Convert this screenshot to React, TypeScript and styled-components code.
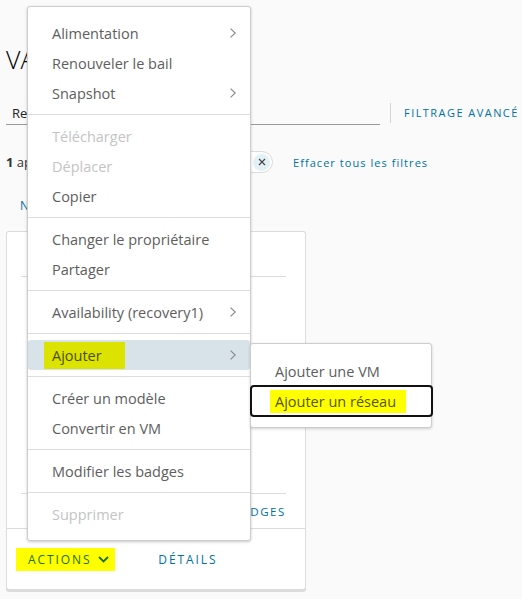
import React from "react";
import styled, { createGlobalStyle } from "styled-components";

const GlobalStyle = createGlobalStyle`
  html, body {
    margin: 0;
    padding: 0;
    background: #fafafa;
    font-family: "Open Sans", "Liberation Sans", sans-serif;
  }
  #root {
    height: 599px;
    overflow: hidden;
  }
`;

const Page = styled.div`
  position: relative;
  padding-left: 6px;
  height: 599px;
`;

const Title = styled.h1`
  margin: 0;
  padding-top: 43px;
  font-size: 25px;
  line-height: 32px;
  font-weight: 300;
  color: #000;
`;

const SearchRow = styled.div`
  display: flex;
  align-items: center;
  margin-top: 25px;
  height: 25px;
`;

const SearchField = styled.div`
  width: 374px;
  height: 24px;
  border-bottom: 1px solid #9a9a9a;
  font-size: 13px;
  line-height: 24px;
  color: #222;
  padding-left: 6px;
  box-sizing: border-box;
`;

const VSep = styled.div`
  width: 1px;
  height: 20px;
  background: #d4d4d4;
  margin-left: 10px;
`;

const Link = styled.span<{ $size?: number; $spacing?: number }>`
  color: #0072a3;
  font-size: ${(p) => p.$size ?? 11}px;
  letter-spacing: ${(p) => p.$spacing ?? 1}px;
  font-weight: 500;
  white-space: nowrap;
`;

const AdvancedLink = styled(Link)`
  margin-left: 13px;
`;

const FilterRow = styled.div`
  display: flex;
  align-items: center;
  margin-top: 25px;
  height: 24px;
`;

const Count = styled.div`
  width: 140px;
  font-size: 13px;
  color: #333;
  b {
    font-weight: 700;
  }
`;

const Chip = styled.div`
  width: 127px;
  height: 22px;
  box-sizing: border-box;
  border: 1px solid #dcdcdc;
  border-radius: 11px;
  background: #fff;
  display: flex;
  align-items: center;
  justify-content: flex-end;
  padding-right: 2px;
`;

const ChipClose = styled.span`
  width: 17px;
  height: 17px;
  border-radius: 50%;
  background: #e1f1f6;
  display: flex;
  align-items: center;
  justify-content: center;
`;

const ClearLink = styled(Link)`
  margin-left: 20px;
`;

const ButtonRow = styled.div`
  margin-top: 18px;
  height: 24px;
  line-height: 24px;
  padding-left: 14px;
`;

const Card = styled.div`
  margin-top: 15px;
  width: 300px;
  height: 358px;
  box-sizing: border-box;
  background: #fff;
  border: 1px solid #dcdcdc;
  border-bottom: none;
  border-radius: 3px;
  box-shadow: 0 3px 0 #dcdcdc;
  display: flex;
  flex-direction: column;
`;

const CardBlock = styled.div`
  padding: 0 19px 0 14px;
`;

const CardHeader = styled.div`
  height: 44px;
  border-bottom: 1px solid #dcdcdc;
`;

const CardBody = styled.div`
  height: 216px;
  border-bottom: 1px solid #dcdcdc;
  display: flex;
  flex-direction: column;
  justify-content: flex-end;
`;

const BodyNote = styled.div`
  font-size: 11px;
  color: #666;
  padding-left: 150px;
  margin-bottom: 27px;
`;

const BadgeRow = styled.div`
  height: 34px;
  display: flex;
  align-items: center;
  justify-content: flex-end;
`;

const CardFooter = styled.div`
  border-top: 1px solid #dcdcdc;
  flex: 1;
  display: flex;
  align-items: flex-start;
  padding: 19px 0 0 9px;
  gap: 31px;
`;

const FooterButton = styled.span<{ $marked?: boolean }>`
  display: inline-flex;
  align-items: center;
  gap: 7px;
  height: 23px;
  padding: 0 6px 0 12px;
  background: ${(p) => (p.$marked ? "#ffff00" : "transparent")};
  color: ${(p) => (p.$marked ? "#1d6e12" : "#0072a3")};
  font-size: 12px;
  letter-spacing: 1.9px;
  font-weight: 500;
`;

const Menu = styled.div`
  position: absolute;
  left: 27px;
  top: 6px;
  width: 224px;
  box-sizing: border-box;
  background: #fff;
  border: 1px solid #cdcdcd;
  border-radius: 3px;
  box-shadow: 0 1px 3px rgba(0, 0, 0, 0.22);
  padding: 11px 0;
`;

const Item = styled.div<{ $disabled?: boolean; $active?: boolean }>`
  position: relative;
  height: 30px;
  display: flex;
  align-items: center;
  padding-left: 24px;
  font-size: 14.5px;
  color: ${(p) => (p.$disabled ? "#c4c4c4" : "#5e5e5e")};
  background: ${(p) => (p.$active ? "#d8e3e9" : "transparent")};
  border-radius: 3px;
  white-space: nowrap;
`;

const Chevron = styled.svg`
  position: absolute;
  right: 14px;
  top: 50%;
  margin-top: -5px;
`;

const Separator = styled.div`
  height: 1px;
  background: #dedede;
  margin: 6px 0;
`;

const Mark = styled.span<{ $left: number; $right: number; $h: number }>`
  display: inline-block;
  background: #ffff00;
  margin-left: -${(p) => p.$left}px;
  padding: 0 ${(p) => p.$right}px 0 ${(p) => p.$left}px;
  height: ${(p) => p.$h}px;
  line-height: ${(p) => p.$h}px;
  color: #565600;
`;

const MarkOnGrey = styled(Mark)`
  background: #dde300;
  color: #4c4f00;
`;

const SubMenu = styled.div`
  position: absolute;
  left: 100%;
  top: 3px;
  width: 182px;
  box-sizing: border-box;
  background: #fff;
  border: 1px solid #cdcdcd;
  border-radius: 3px;
  box-shadow: 0 1px 3px rgba(0, 0, 0, 0.18);
  padding: 12px 0 11px;
  z-index: 2;
`;

const FocusItem = styled(Item)`
  &::after {
    content: "";
    position: absolute;
    inset: -1px -2px -1px -1px;
    border: 2px solid #111;
    border-radius: 4px;
  }
`;

const Arrow = () => (
  <Chevron width="6" height="10" viewBox="0 0 6 10">
    <polyline points="0.6,0.6 5.2,5 0.6,9.4" fill="none" stroke="#8a8a8a" strokeWidth="1.2" />
  </Chevron>
);

export default function App() {
  return (
    <>
      <GlobalStyle />
      <Page>
        <Title>VApps</Title>
        <SearchRow>
          <SearchField>Rechercher</SearchField>
          <VSep />
          <AdvancedLink $size={11} $spacing={1.45}>
            FILTRAGE AVANCÉ
          </AdvancedLink>
        </SearchRow>
        <FilterRow>
          <Count>
            <b>1</b> application
          </Count>
          <Chip>
            <ChipClose>
              <svg width="8" height="8" viewBox="0 0 8 8">
                <path d="M1 1 L7 7 M7 1 L1 7" stroke="#444" strokeWidth="1.1" />
              </svg>
            </ChipClose>
          </Chip>
          <ClearLink $size={11} $spacing={1.05}>Effacer tous les filtres</ClearLink>
        </FilterRow>
        <ButtonRow>
          <Link $size={12} $spacing={1.5}>NOUVEAU</Link>
        </ButtonRow>
        <Card>
          <CardBlock>
            <CardHeader />
            <CardBody>
              <BodyNote>Pas de réseaux</BodyNote>
            </CardBody>
            <BadgeRow>
              <Link $size={11.5} $spacing={1.6}>MODIFIER LES BADGES</Link>
            </BadgeRow>
          </CardBlock>
          <CardFooter>
            <FooterButton $marked>
              ACTIONS
              <svg width="11" height="7" viewBox="0 0 11 7">
                <polyline points="1,1 5.5,5.5 10,1" fill="none" stroke="#1d6e12" strokeWidth="1.8" />
              </svg>
            </FooterButton>
            <FooterButton>DÉTAILS</FooterButton>
          </CardFooter>
        </Card>

        <Menu>
          <Item>
            Alimentation
            <Arrow />
          </Item>
          <Item>Renouveler le bail</Item>
          <Item>
            Snapshot
            <Arrow />
          </Item>
          <Separator />
          <Item $disabled>Télécharger</Item>
          <Item $disabled>Déplacer</Item>
          <Item>Copier</Item>
          <Separator />
          <Item>Changer le propriétaire</Item>
          <Item>Partager</Item>
          <Separator />
          <Item>
            Availability (recovery1)
            <Arrow />
          </Item>
          <Separator />
          <Item $active>
            <MarkOnGrey $left={8} $right={23} $h={27}>
              Ajouter
            </MarkOnGrey>
            <Arrow />
            <SubMenu>
              <Item>Ajouter une VM</Item>
              <FocusItem>
                <Mark $left={5} $right={10} $h={23}>
                  Ajouter un réseau
                </Mark>
              </FocusItem>
            </SubMenu>
          </Item>
          <Separator />
          <Item>Créer un modèle</Item>
          <Item>Convertir en VM</Item>
          <Separator />
          <Item>Modifier les badges</Item>
          <Separator />
          <Item $disabled>Supprimer</Item>
        </Menu>
      </Page>
    </>
  );
}
